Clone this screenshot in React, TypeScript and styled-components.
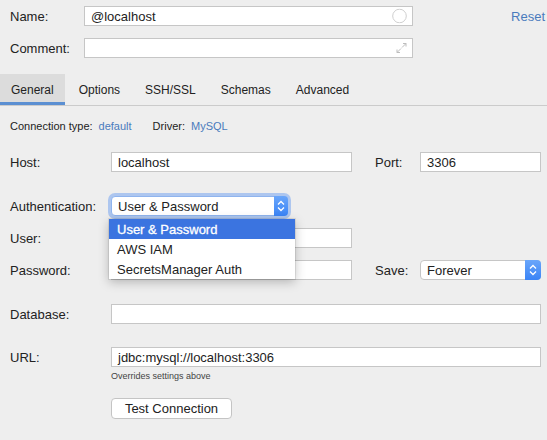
import styled, { createGlobalStyle } from "styled-components";

const GlobalStyle = createGlobalStyle`
  html, body {
    margin: 0;
    padding: 0;
    background: #eeeeee;
  }
  body {
    font-family: "Liberation Sans", Arial, sans-serif;
    font-size: 13px;
    color: #222;
  }
`;

const Page = styled.div`
  width: 547px;
  height: 440px;
  overflow: hidden;
  background: #eeeeee;
`;

const Header = styled.div`
  padding: 6px 2px 0 10px;
`;

const Row = styled.div<{ $top?: number; $h?: number }>`
  display: flex;
  align-items: center;
  height: ${({ $h }) => $h ?? 20}px;
  margin-top: ${({ $top }) => $top ?? 0}px;
`;

const Label = styled.div<{ $w: number }>`
  width: ${({ $w }) => $w}px;
  flex-shrink: 0;
  font-size: 13px;
  color: #222;
`;

const Field = styled.div<{ $w?: number }>`
  position: relative;
  box-sizing: border-box;
  height: 20px;
  width: ${({ $w }) => ($w ? `${$w}px` : "auto")};
  flex: ${({ $w }) => ($w ? "0 0 auto" : "1")};
  background: #fff;
  border: 1px solid #c6c6c6;
  padding: 0 6px;
  display: flex;
  align-items: center;
  font-size: 13px;
  color: #222;
`;

const FieldIcon = styled.div`
  position: absolute;
  right: 5px;
  top: 50%;
  transform: translateY(-50%);
  display: flex;
`;

const Reset = styled.a`
  margin-left: auto;
  color: #4a7bbd;
  font-size: 13px;
`;

const TabBar = styled.div`
  display: flex;
  gap: 3px;
  height: 31px;
  margin-top: 16px;
  border-bottom: 1px solid #cbcbcb;
`;

const Tab = styled.div<{ $active?: boolean }>`
  display: flex;
  align-items: center;
  padding: 0 11px;
  font-size: 12px;
  color: #222;
  background: ${({ $active }) => ($active ? "#dcdcdc" : "transparent")};
  box-shadow: ${({ $active }) => ($active ? "inset 0 -3px 0 #5b8fd2" : "none")};
`;

const Body = styled.div`
  padding: 0 6px 0 10px;
`;

const Info = styled.div`
  display: flex;
  align-items: center;
  height: 14px;
  margin-top: 13px;
  font-size: 11px;
  color: #222;
`;

const InfoLink = styled.span<{ $gap: number }>`
  color: #4a7bbd;
  margin-left: 6px;
  margin-right: ${({ $gap }) => $gap}px;
`;

const SelectBox = styled.div<{ $w: number; $focused?: boolean; $stepW: number }>`
  position: relative;
  box-sizing: border-box;
  width: ${({ $w }) => $w}px;
  height: 20px;
  background: #fff;
  border: 1px solid ${({ $focused }) => ($focused ? "#8fb4ee" : "#c6c6c6")};
  border-radius: 4px;
  padding: 0 ${({ $stepW }) => $stepW + 4}px 0 6px;
  display: flex;
  align-items: center;
  font-size: 13px;
  color: #222;
  box-shadow: ${({ $focused }) =>
    $focused ? "0 0 0 3px rgba(120, 165, 240, 0.55)" : "none"};
`;

const Stepper = styled.div<{ $w: number }>`
  position: absolute;
  top: -1px;
  right: -1px;
  bottom: -1px;
  width: ${({ $w }) => $w}px;
  border-radius: 0 4px 4px 0;
  background: linear-gradient(#6aa6fa, #3a84f6);
  display: flex;
  align-items: center;
  justify-content: center;
`;

const Menu = styled.div`
  position: absolute;
  top: 22px;
  left: -3px;
  width: 186px;
  background: #fff;
  box-shadow: 0 3px 10px rgba(0, 0, 0, 0.25), 0 0 0 1px rgba(0, 0, 0, 0.08);
  z-index: 5;
`;

const MenuItem = styled.div<{ $selected?: boolean }>`
  height: 20px;
  display: flex;
  align-items: center;
  padding-left: 8px;
  font-size: 13px;
  color: ${({ $selected }) => ($selected ? "#fff" : "#222")};
  background: ${({ $selected }) => ($selected ? "#3b74e0" : "transparent")};
  -webkit-text-stroke: ${({ $selected }) => ($selected ? "0.3px #fff" : "0")};
`;

const Gap = styled.div<{ $w: number }>`
  width: ${({ $w }) => $w}px;
  flex-shrink: 0;
`;

const Note = styled.div`
  height: 11px;
  margin-top: 4px;
  padding-left: 101px;
  font-size: 9px;
  line-height: 11px;
  color: #444;
`;

const Button = styled.button`
  box-sizing: border-box;
  margin-top: 16px;
  margin-left: 101px;
  width: 121px;
  height: 21px;
  background: #fff;
  border: 1px solid #c4c4c4;
  border-radius: 4px;
  font-family: "Liberation Sans", Arial, sans-serif;
  font-size: 13px;
  color: #222;
  padding: 0;
`;

const Chevrons = () => (
  <svg width="8" height="12" viewBox="0 0 8 12">
    <path d="M1 4.5 L4 1.5 L7 4.5 M1 7.5 L4 10.5 L7 7.5" fill="none" stroke="#fff" strokeWidth="1.3" />
  </svg>
);

const App = () => {
  return (
    <>
      <GlobalStyle />
      <Page>
        <Header>
          <Row>
            <Label $w={74}>Name:</Label>
            <Field $w={329}>
              @localhost
              <FieldIcon>
                <svg width="15" height="15" viewBox="0 0 15 15">
                  <circle cx="7.5" cy="7.5" r="6.8" fill="#fff" stroke="#cfcfcf" strokeWidth="1" />
                </svg>
              </FieldIcon>
            </Field>
            <Reset>Reset</Reset>
          </Row>
          <Row $top={12}>
            <Label $w={74}>Comment:</Label>
            <Field $w={329}>
              <FieldIcon>
                <svg width="11" height="11" viewBox="0 0 11 11">
                  <path d="M6 5 L10 1 M7 1 L10 1 L10 4 M5 6 L1 10 M1 7 L1 10 L4 10" fill="none" stroke="#bdbdbd" strokeWidth="1" />
                </svg>
              </FieldIcon>
            </Field>
          </Row>
        </Header>
        <TabBar>
          <Tab $active>General</Tab>
          <Tab>Options</Tab>
          <Tab>SSH/SSL</Tab>
          <Tab>Schemas</Tab>
          <Tab>Advanced</Tab>
        </TabBar>
        <Body>
          <Info>
            Connection type:<InfoLink $gap={21}>default</InfoLink>
            Driver:<InfoLink $gap={0}>MySQL</InfoLink>
          </Info>
          <Row $top={19}>
            <Label $w={101}>Host:</Label>
            <Field $w={241}>localhost</Field>
            <Gap $w={23} />
            <Label $w={45}>Port:</Label>
            <Field>3306</Field>
          </Row>
          <Row $top={24}>
            <Label $w={101}>Authentication:</Label>
            <SelectBox $w={177} $focused $stepW={14}>
              User &amp; Password
              <Stepper $w={14}>
                <Chevrons />
              </Stepper>
              <Menu>
                <MenuItem $selected>User &amp; Password</MenuItem>
                <MenuItem>AWS IAM</MenuItem>
                <MenuItem>SecretsManager Auth</MenuItem>
              </Menu>
            </SelectBox>
          </Row>
          <Row $top={12}>
            <Label $w={101}>User:</Label>
            <Field $w={241} />
          </Row>
          <Row $top={12}>
            <Label $w={101}>Password:</Label>
            <Field $w={241} />
            <Gap $w={23} />
            <Label $w={45}>Save:</Label>
            <SelectBox $w={121} $stepW={16}>
              Forever
              <Stepper $w={16}>
                <Chevrons />
              </Stepper>
            </SelectBox>
          </Row>
          <Row $top={24}>
            <Label $w={101}>Database:</Label>
            <Field />
          </Row>
          <Row $top={23}>
            <Label $w={101}>URL:</Label>
            <Field>jdbc:mysql://localhost:3306</Field>
          </Row>
          <Note>Overrides settings above</Note>
          <Button>Test Connection</Button>
        </Body>
      </Page>
    </>
  );
};

export default App;
